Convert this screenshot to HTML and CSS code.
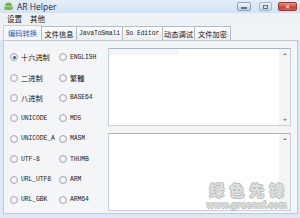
FILE: index.html
```html
<!DOCTYPE html>
<html>
<head>
<meta charset="utf-8">
<link rel="stylesheet" href="styles.css">
</head>
<body>
<div class="window">
  <div class="titlebar">
    <svg class="appicon" width="9" height="9" viewBox="0 0 9 9">
      <path d="M1 4 A3.5 3.5 0 0 1 8 4 Z" fill="#7cb83a"/>
      <rect x="1" y="4.6" width="7" height="3.4" rx="0.8" fill="#7cb83a"/>
      <rect x="0" y="4.6" width="0.8" height="2.6" fill="#7cb83a"/>
      <rect x="8.2" y="4.6" width="0.8" height="2.6" fill="#7cb83a"/>
    </svg>
    <span class="title">AR Helper</span>
    <div class="controls">
      <div class="btn min"><span class="dash"></span></div>
      <div class="btn max"><span class="box"></span></div>
      <div class="btn close">✕</div>
    </div>
  </div>
  <div class="menubar">
    <span class="menu">设置</span>
    <span class="menu">其他</span>
  </div>
  <div class="tabs">
    <div class="tab sel cjk">编码转换</div>
    <div class="tab cjk">文件信息</div>
    <div class="tab mono">JavaToSmali</div>
    <div class="tab mono">So Editor</div>
    <div class="tab cjk">动态调试</div>
    <div class="tab cjk">文件加密</div>
  </div>
  <div class="panel">
    <div class="radios">
      <div class="opt"><span class="radio on"></span><span class="cjk">十六进制</span></div>
      <div class="opt"><span class="radio"></span><span class="mono">ENGLISH</span></div>
      <div class="opt"><span class="radio"></span><span class="cjk">二进制</span></div>
      <div class="opt"><span class="radio"></span><span class="cjk">繁體</span></div>
      <div class="opt"><span class="radio"></span><span class="cjk">八进制</span></div>
      <div class="opt"><span class="radio"></span><span class="mono">BASE64</span></div>
      <div class="opt"><span class="radio"></span><span class="mono">UNICODE</span></div>
      <div class="opt"><span class="radio"></span><span class="mono">MD5</span></div>
      <div class="opt"><span class="radio"></span><span class="mono">UNICODE_A</span></div>
      <div class="opt"><span class="radio"></span><span class="mono">MASM</span></div>
      <div class="opt"><span class="radio"></span><span class="mono">UTF-8</span></div>
      <div class="opt"><span class="radio"></span><span class="mono">THUMB</span></div>
      <div class="opt"><span class="radio"></span><span class="mono">URL_UTF8</span></div>
      <div class="opt"><span class="radio"></span><span class="mono">ARM</span></div>
      <div class="opt"><span class="radio"></span><span class="mono">URL_GBK</span></div>
      <div class="opt"><span class="radio"></span><span class="mono">ARM64</span></div>
    </div>
    <div class="boxes">
      <div class="textbox first">
        <div class="area"><div class="hl"></div></div>
        <div class="sbar"><span class="up"></span><span class="down"></span></div>
      </div>
      <div class="textbox">
        <div class="area"></div>
        <div class="sbar"><span class="up"></span><span class="down"></span></div>
      </div>
    </div>
    <div class="watermark">
      <div class="wm1">绿色先锋</div>
      <div class="wm2">www.greenxf.com</div>
    </div>
  </div>
</div>
</body>
</html>
```

FILE: styles.css
```css
html, body {
  margin: 0;
  padding: 0;
}
body {
  width: 300px;
  height: 218px;
  overflow: hidden;
  background: #dbe7f4;
}
.window {
  display: flex;
  flex-direction: column;
  width: 300px;
  height: 218px;
}
.titlebar {
  height: 13px;
  display: flex;
  align-items: center;
  background: linear-gradient(#e4eef9, #d3e2f2);
  padding-left: 4px;
}
.appicon {
  flex: none;
}
.title {
  margin-left: 4px;
  font-family: "Open Sans", "Noto Sans", sans-serif;
  font-size: 8.5px;
  color: #1e2a3a;
  line-height: 13px;
}
.controls {
  margin-left: auto;
  display: flex;
  align-items: flex-start;
  height: 13px;
  padding-top: 2px;
  box-sizing: border-box;
  padding-right: 3px;
}
.btn {
  height: 9px;
  box-sizing: border-box;
  border: 1px solid #8fa3bd;
  border-radius: 2px;
  display: flex;
  align-items: center;
  justify-content: center;
}
.min {
  width: 14px;
  background: linear-gradient(#eef4fb, #c3d4e8);
}
.dash {
  width: 6px;
  height: 2px;
  background: #fff;
  border: 1px solid #5c6f89;
  box-sizing: border-box;
  margin-top: 2px;
}
.max {
  width: 13px;
  margin-left: 8px;
  background: linear-gradient(#eef4fb, #c9d7e8);
  border-color: #a7b6ca;
}
.box {
  width: 5px;
  height: 4px;
  border: 1px solid #5c6f89;
  box-sizing: border-box;
}
.close {
  width: 19px;
  margin-left: 6px;
  background: linear-gradient(#e7968a, #c8453a 60%, #d0584a);
  border-color: #9a3a33;
  color: #fff;
  font-size: 6px;
  font-weight: bold;
  font-family: "DejaVu Sans", sans-serif;
  line-height: 7px;
}
.menubar {
  height: 12px;
  display: flex;
  align-items: center;
  background: #eef2f7;
  padding-left: 7px;
  gap: 8px;
}
.menu {
  font-family: "Noto Sans CJK SC", sans-serif;
  font-size: 7.5px;
  color: #111;
  line-height: 12px;
}
.cjk {
  font-family: "Noto Sans CJK SC", sans-serif;
  font-size: 7.2px;
  color: #111;
}
.mono {
  font-family: "Liberation Mono", monospace;
  font-size: 6.4px;
  color: #222;
  letter-spacing: -0.1px;
}
.tabs {
  height: 16px;
  display: flex;
  align-items: flex-end;
  background: #f0f2f5;
  padding-left: 3px;
}
.tab {
  height: 14px;
  box-sizing: border-box;
  border: 1px solid #b4bcc6;
  border-bottom: none;
  background: linear-gradient(#fdfdfd, #eceef1);
  display: flex;
  align-items: center;
  justify-content: center;
  line-height: 12px;
  margin-right: -1px;
}
.tab:nth-child(1) { width: 39px; }
.tab:nth-child(2) { width: 36px; }
.tab:nth-child(3) { width: 47px; }
.tab:nth-child(4) { width: 41px; }
.tab:nth-child(5) { width: 33px; }
.tab:nth-child(6) { width: 37px; }
.tab.sel {
  background: #f6f7f8;
  color: #1f5fbf;
  border-color: #c8ced6;
  height: 15px;
}
.panel {
  position: relative;
  flex: 1;
  margin: 0 2px 4px 3px;
  border: 1px solid #c3c9d1;
  background: #f4f5f6;
  display: flex;
  padding: 6px 6px 2px 6px;
  box-sizing: border-box;
}
.radios {
  width: 96px;
  display: grid;
  grid-template-columns: 49px 47px;
  grid-auto-rows: 20.4px;
  align-content: start;
}
.opt {
  display: flex;
  align-items: center;
  white-space: nowrap;
}
.radio {
  width: 6px;
  height: 6px;
  border-radius: 50%;
  border: 1px solid #a4abb4;
  background: radial-gradient(#ffffff, #dde2e8);
  margin: 0 3px 0 0;
  flex: none;
  position: relative;
}
.radio.on::after {
  content: "";
  position: absolute;
  left: 1.5px;
  top: 1.5px;
  width: 3px;
  height: 3px;
  border-radius: 50%;
  background: #2c5da8;
}
.boxes {
  margin-left: 2px;
  width: 186px;
  display: flex;
  flex-direction: column;
  gap: 7px;
  margin-top: 1px;
}
.textbox {
  display: flex;
  border: 1px solid #c9d0d9;
  border-top-color: #a9b4c2;
  background: #fff;
  height: 78px;
  box-sizing: border-box;
}
.area {
  flex: 1;
  position: relative;
}
.hl {
  width: 70px;
  height: 6px;
  background: #f3f4f6;
}
.sbar {
  width: 11px;
  background: #f3f4f5;
  display: flex;
  flex-direction: column;
  justify-content: space-between;
  align-items: center;
  padding: 4px 0;
  box-sizing: border-box;
}
.up, .down {
  width: 0;
  height: 0;
  border-left: 2px solid transparent;
  border-right: 2px solid transparent;
}
.up {
  border-bottom: 2px solid #7d848d;
}
.down {
  border-top: 2px solid #7d848d;
}
.watermark {
  position: absolute;
  right: 10px;
  bottom: 2px;
  display: flex;
  flex-direction: column;
  align-items: center;
  pointer-events: none;
}
.wm1 {
  font-family: "Noto Sans CJK SC", sans-serif;
  font-weight: 900;
  font-size: 15px;
  line-height: 22px;
  height: 22px;
  letter-spacing: 5px;
  margin-right: -5px;
  color: #dcdfdd;
  text-shadow: 1px 0 0 #b8bdba, -1px 0 0 #b8bdba, 0 1px 0 #b8bdba, 0 -1px 0 #b8bdba;
}
.wm2 {
  font-family: "DejaVu Sans", sans-serif;
  font-weight: bold;
  font-size: 8px;
  line-height: 10px;
  height: 10px;
  color: #dcdfdd;
  text-shadow: 0.6px 0 0 #b8bdba, -0.6px 0 0 #b8bdba, 0 0.6px 0 #b8bdba, 0 -0.6px 0 #b8bdba;
}
```
